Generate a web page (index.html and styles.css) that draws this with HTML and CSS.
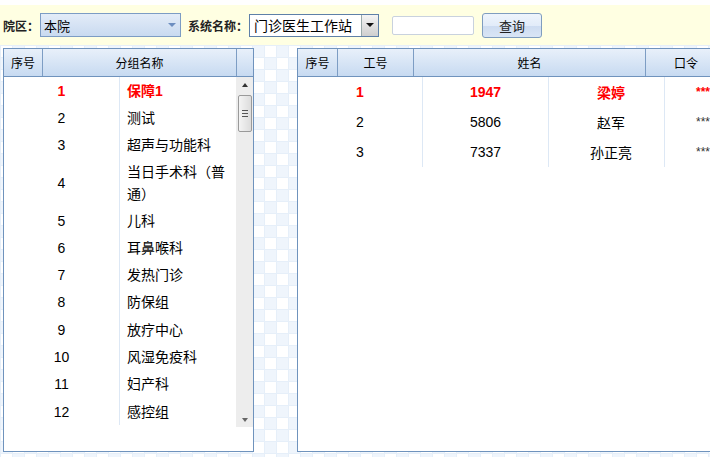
FILE: index.html
```html
<!DOCTYPE html>
<html lang="zh">
<head>
<meta charset="utf-8">
<link rel="stylesheet" href="styles.css">
</head>
<body>
<div class="topbar">
  <span class="lbl">院区：</span>
  <div class="sel sel-blue"><span>本院</span><span class="arr-blue"></span></div>
  <span class="lbl lbl2">系统名称：</span>
  <div class="sel sel-white"><span>门诊医生工作站</span><span class="dd"><span class="arr-black"></span></span></div>
  <div class="inp"></div>
  <div class="btn">查询</div>
</div>
<div class="main">
  <div class="panel left">
    <div class="head">
      <div class="hc hc-no">序号</div>
      <div class="hc hc-name">分组名称</div>
      <div class="hc hc-sb"></div>
    </div>
    <div class="lbody">
      <div class="list">
        <div class="row red"><div class="c1">1</div><div class="c2">保障1</div></div>
        <div class="row"><div class="c1">2</div><div class="c2">测试</div></div>
        <div class="row"><div class="c1">3</div><div class="c2">超声与功能科</div></div>
        <div class="row tall"><div class="c1">4</div><div class="c2">当日手术科（普通）</div></div>
        <div class="row"><div class="c1">5</div><div class="c2">儿科</div></div>
        <div class="row"><div class="c1">6</div><div class="c2">耳鼻喉科</div></div>
        <div class="row"><div class="c1">7</div><div class="c2">发热门诊</div></div>
        <div class="row"><div class="c1">8</div><div class="c2">防保组</div></div>
        <div class="row"><div class="c1">9</div><div class="c2">放疗中心</div></div>
        <div class="row"><div class="c1">10</div><div class="c2">风湿免疫科</div></div>
        <div class="row"><div class="c1">11</div><div class="c2">妇产科</div></div>
        <div class="row"><div class="c1">12</div><div class="c2">感控组</div></div>
      </div>
      <div class="sbar">
        <span class="sb-up"></span>
        <div class="thumb"><span></span><span></span><span></span></div>
        <span class="sb-down"></span>
      </div>
    </div>
  </div>
  <div class="panel right">
    <div class="head">
      <div class="hc rh1">序号</div>
      <div class="hc rh2">工号</div>
      <div class="hc rh3">姓名</div>
      <div class="hc rh4">口令</div>
    </div>
    <div class="rbody">
      <div class="rrow red"><div class="r1">1</div><div class="r2">1947</div><div class="r3">梁婷</div><div class="r4">******</div></div>
      <div class="rrow"><div class="r1">2</div><div class="r2">5806</div><div class="r3">赵军</div><div class="r4">******</div></div>
      <div class="rrow"><div class="r1">3</div><div class="r2">7337</div><div class="r3">孙正亮</div><div class="r4">******</div></div>
    </div>
  </div>
</div>
</body>
</html>
```
FILE: styles.css
```css
* { box-sizing: border-box; }
html, body { margin: 0; padding: 0; }
body {
  width: 710px;
  height: 457px;
  overflow: hidden;
  font-family: "Liberation Sans", "Noto Sans CJK SC", sans-serif;
  font-size: 14px;
  color: #000;
  background: #fff;
}
.topbar {
  margin-top: 5px;
  height: 40px;
  background: #ffffe2;
  display: flex;
  align-items: center;
  padding-left: 3px;
}
.lbl { font-size: 12px; font-weight: bold; color: #222; }
.lbl2 { margin-left: 7px; }
.sel {
  display: flex;
  align-items: center;
  height: 24px;
  font-size: 13px;
  position: relative;
}
.sel-blue {
  width: 141px;
  margin-left: 1px;
  border: 1px solid #7c9cc4;
  background: linear-gradient(#e3ecf8, #c9daf0);
  padding-left: 3px;
  justify-content: space-between;
  padding-right: 4px;
}
.arr-blue {
  width: 0; height: 0;
  border-left: 4px solid transparent;
  border-right: 4px solid transparent;
  border-top: 4px solid #6d8ec0;
}
.sel-white {
  width: 130px;
  height: 23px;
  margin-left: 1px;
  border: 1px solid #5e80a8;
  background: #fff;
  padding-left: 4px;
  justify-content: space-between;
  font-size: 14px;
}
.dd {
  width: 17px;
  height: 21px;
  border-left: 1px solid #9aa;
  background: linear-gradient(#f4f4f4, #cfcfcf);
  display: flex;
  align-items: center;
  justify-content: center;
}
.arr-black {
  width: 0; height: 0;
  border-left: 4px solid transparent;
  border-right: 4px solid transparent;
  border-top: 4px solid #111;
}
.inp {
  width: 82px;
  height: 19px;
  margin-left: 13px;
  border: 1px solid #c9d2de;
  border-radius: 2px;
  background: #fff;
}
.btn {
  width: 60px;
  height: 25px;
  margin-left: 8px;
  border: 1px solid #7f9dbf;
  border-radius: 3px;
  background: linear-gradient(#eef4fc 0%, #e2ecf9 50%, #cddcf1 52%, #d9e5f5 100%);
  font-size: 13px;
  display: flex;
  align-items: center;
  justify-content: center;
  color: #222;
}
.main {
  height: 412px;
  display: flex;
  align-items: flex-start;
  gap: 43px;
  padding: 3px 0 0 3px;
  background-color: #fbfdff;
  background-image:
    linear-gradient(#e6eff9 1px, transparent 1px),
    linear-gradient(90deg, #e6eff9 1px, transparent 1px),
    repeating-conic-gradient(#eff5fc 0 25%, #ffffff 0 50%);
  background-size: 12px 12px, 12px 12px, 24px 24px;
}
.panel {
  height: 404px;
  border: 1px solid #6f93bd;
  background: #fff;
  flex-shrink: 0;
}
.left { width: 251px; }
.right { width: 430px; }
.head {
  height: 28px;
  display: flex;
  background: linear-gradient(#e8f0fa, #c7daf1);
  border-bottom: 1px solid #6f93bd;
  font-size: 12px;
}
.hc {
  display: flex;
  align-items: center;
  justify-content: center;
  border-right: 1px solid #7d9dc4;
}
.hc-no { width: 39px; }
.hc-name { width: 194px; }
.hc-sb { flex: 1; border-right: none; }
.lbody { display: flex; height: 350px; }
.list { width: 232px; }
.row {
  display: flex;
  height: 27.3px;
  align-items: center;
}
.row.tall { height: 48px; }
.c1 {
  width: 116px;
  height: 100%;
  display: flex;
  align-items: center;
  justify-content: center;
  border-right: 1px solid #dde8f5;
}
.c2 {
  flex: 1;
  height: 100%;
  display: flex;
  align-items: center;
  padding-left: 7px;
  padding-right: 8px;
  line-height: 22px;
}
.red { color: #ff0000; font-weight: bold; }
.sbar {
  width: 17px;
  height: 350px;
  background: #ededed;
  position: relative;
  display: flex;
  flex-direction: column;
  align-items: center;
}
.sb-up {
  margin-top: 6px;
  width: 0; height: 0;
  border-left: 3px solid transparent;
  border-right: 3px solid transparent;
  border-bottom: 4px solid #333;
}
.thumb {
  margin-top: 8px;
  width: 14px;
  height: 37px;
  border: 1px solid #9a9a9a;
  border-radius: 2px;
  background: linear-gradient(90deg, #f4f4f4, #dcdcdc);
  display: flex;
  flex-direction: column;
  align-items: center;
  justify-content: center;
  gap: 2px;
}
.thumb span { width: 6px; height: 1px; background: #555; }
.sb-down {
  margin-top: auto;
  margin-bottom: 5px;
  width: 0; height: 0;
  border-left: 3px solid transparent;
  border-right: 3px solid transparent;
  border-top: 4px solid #666;
}
.rh1 { width: 40px; }
.rh2 { width: 76px; }
.rh3 { width: 232px; }
.rh4 { flex: 1; border-right: none; }
.rbody { padding-top: 0; }
.rrow { display: flex; height: 30px; font-size: 14px; }
.rrow > div {
  display: flex;
  align-items: center;
  justify-content: center;
  border-right: 1px solid #dde8f5;
}
.r1 { width: 125px; }
.r2 { width: 126px; }
.r3 { width: 116px; padding-left: 9px; }
.r4 { flex: 1; border-right: none !important; justify-content: flex-start !important; padding-left: 31px; font-size: 12px; }
.rrow:not(.red) .r4 { color: #333; }
```
